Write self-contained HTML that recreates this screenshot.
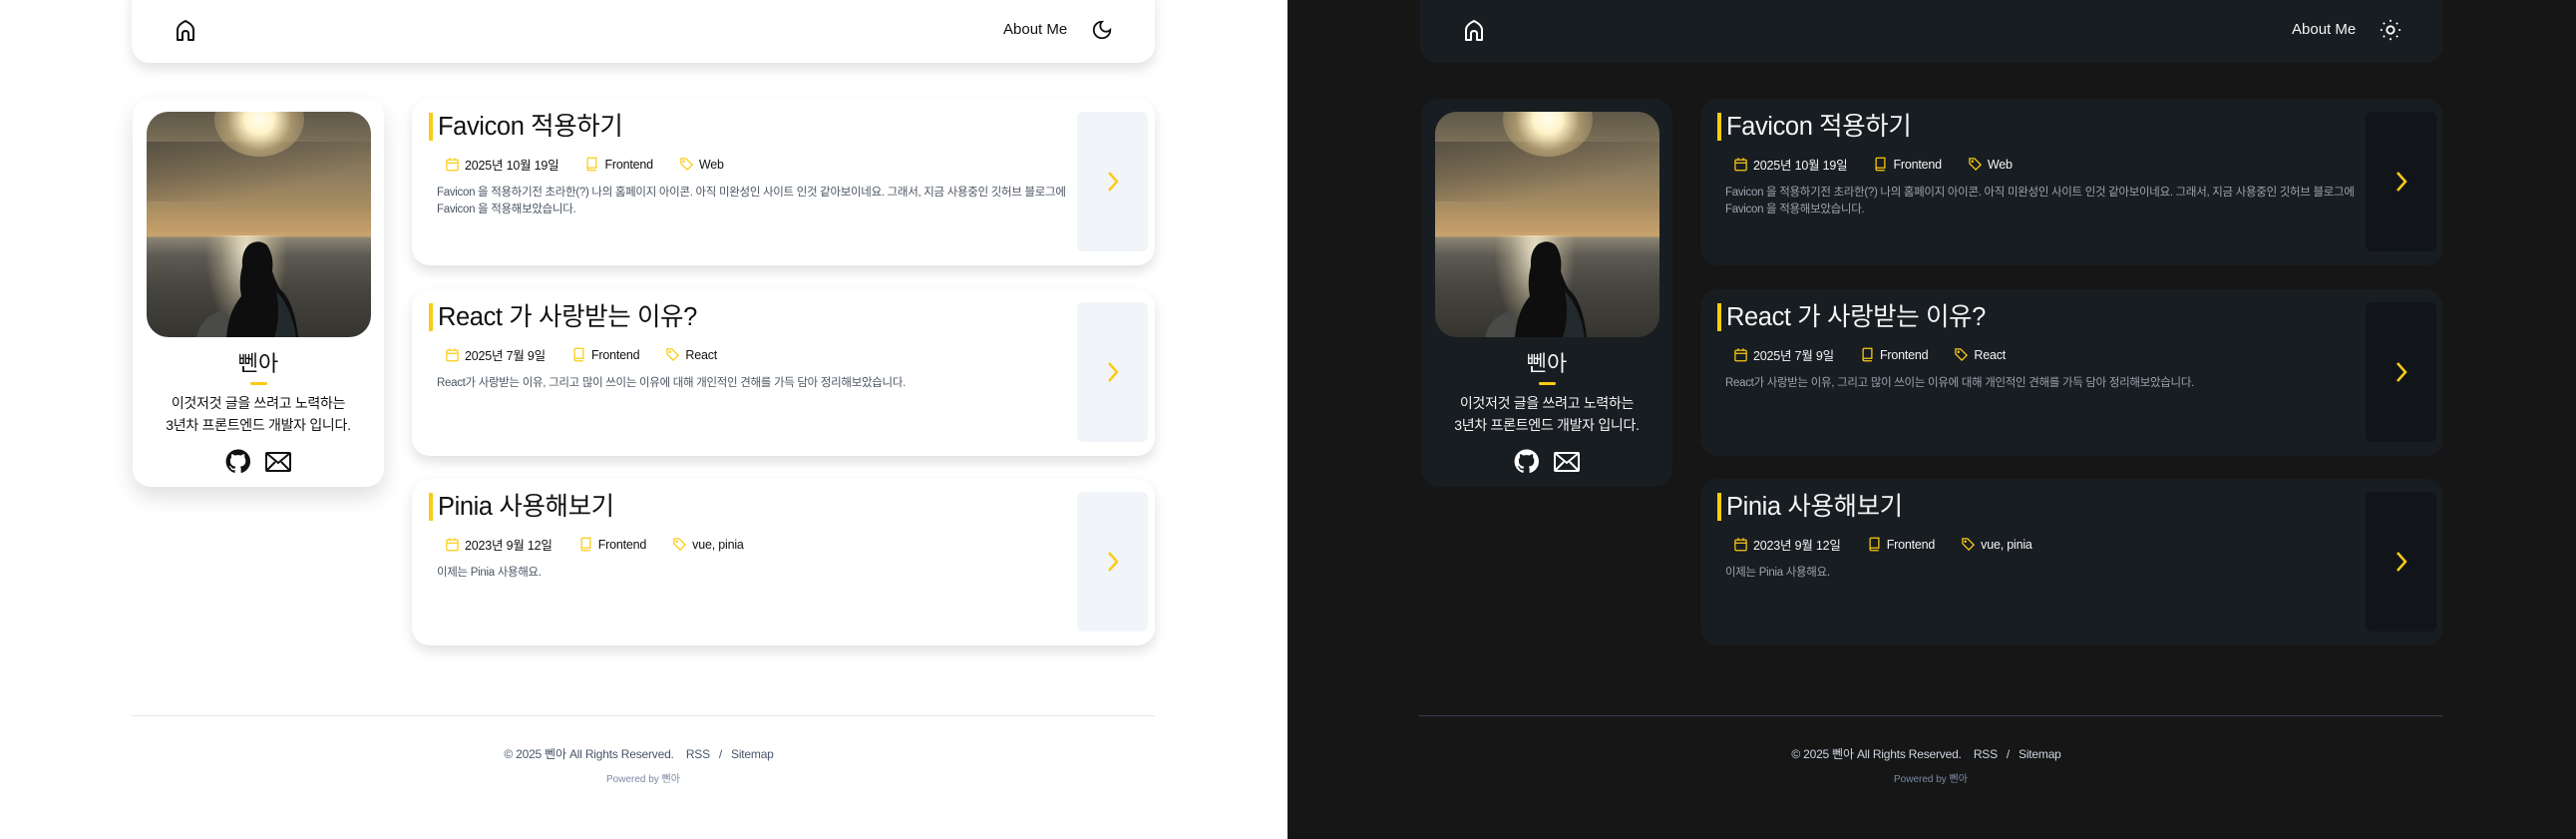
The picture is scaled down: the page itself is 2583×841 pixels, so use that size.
<!DOCTYPE html>
<html><head><meta charset="utf-8">
<style>
*{margin:0;padding:0;box-sizing:border-box}
body{width:2583px;height:841px;overflow:hidden;font-family:"Liberation Sans","Noto Sans CJK KR",sans-serif;position:relative;background:#fff}
.half{position:absolute;top:0;height:841px;width:1292px}
.l{left:0;background:#fff;color:#111}
.d{left:1291px;width:1292px;background:#161616;color:#f3f4f6}
.hdr{position:absolute;left:132px;top:-20px;width:1026px;height:83px;border-radius:18px;background:#fff;box-shadow:0 6px 12px rgba(0,0,0,.12)}
.d .hdr{left:133px;background:#181d21;box-shadow:none}
.home{position:absolute;left:43px;top:39px}
.about{position:absolute;left:874px;top:41px;font-size:15px}
.theme{position:absolute;left:962px;top:39px}
.prof{position:absolute;left:133px;top:99px;width:252px;height:389px;border-radius:18px;background:#fff;box-shadow:0 10px 22px rgba(0,0,0,.13)}
.d .prof{left:134px;background:#181d21;box-shadow:none}
.photo{position:absolute;left:14px;top:13px;width:225px;height:226px;border-radius:22px;overflow:hidden;
background:linear-gradient(180deg,#5f5848 0%,#7c7058 14%,#8e7d5e 28%,#a88d62 42%,#c29c68 52%,#caa46e 55%,#8a8373 56%,#5c5a52 64%,#47453f 78%,#35342f 100%)}
.sun{position:absolute;left:68px;top:-30px;width:90px;height:75px;border-radius:50%;background:radial-gradient(circle,#fffdf0 0%,#fff3c8 25%,rgba(230,200,140,.5) 55%,rgba(200,170,110,0) 100%)}
.glit{position:absolute;left:60px;top:124px;width:80px;height:102px;background:radial-gradient(ellipse at 50% 15%,rgba(255,245,215,.85),rgba(220,205,170,.35) 45%,rgba(0,0,0,0) 72%)}
.cl{position:absolute;left:0;top:30px;width:225px;height:60px;background:linear-gradient(165deg,rgba(60,56,48,.55),rgba(60,56,48,0) 70%)}
.name{position:absolute;left:0;width:252px;top:248px;text-align:center;font-size:22px}
.bar{position:absolute;left:118px;top:284px;width:17px;height:3px;background:#facc15;border-radius:2px}
.desc{position:absolute;left:0;width:252px;top:294px;text-align:center;font-size:14px;line-height:22px;letter-spacing:-.3px}
.soc{position:absolute;left:0;width:252px;top:351px;text-align:center}
.soc svg{margin:0 5px;vertical-align:middle}
.card{position:absolute;left:413px;width:745px;height:167px;border-radius:18px;background:#fff;box-shadow:0 6px 12px rgba(0,0,0,.12)}
.d .card{left:414px;background:#181d21;box-shadow:none}
.ttl{position:absolute;left:17px;top:14px;font-size:25.5px;letter-spacing:-.4px;border-left:4px solid #facc15;padding-left:5px;line-height:28px;height:28px}
.meta{position:absolute;left:33px;top:56px;font-size:12.5px;display:flex;align-items:center;letter-spacing:-.2px}
.meta span{display:inline-flex;align-items:center;margin-right:26px}
.meta svg{margin-right:5px}
.ex{position:absolute;left:25px;top:86px;font-size:11.5px;line-height:17px;color:#4b5563;width:640px;letter-spacing:-.3px}
.d .ex{color:#9ca3af}
.arr{position:absolute;right:7px;top:13px;width:71px;height:140px;border-radius:6px;background:#f1f4f8;display:flex;align-items:center;justify-content:center}
.d .arr{background:#11151a}
.fline{position:absolute;left:132px;top:717px;width:1026px;height:1px;background:#e5e7eb}
.d .fline{background:#374151}
.ftxt{position:absolute;left:132px;width:1026px;top:747px;text-align:center;font-size:12px;color:#475569;letter-spacing:-.2px}
.d .ftxt{color:#cbd5e1}
.ftxt b{font-weight:normal;margin:0 9px}
.pw{position:absolute;left:132px;width:1026px;top:772px;text-align:center;font-size:10px;color:#7c8aa5}
</style></head><body>

<div class="half l">
 <div class="hdr">
  <svg class="home" width="22" height="24" viewBox="0 0 22 24" fill="none" stroke="#111" stroke-width="2"><path d="M3 21V11Q3 6 11 2Q19 6 19 11V21H14V15Q14 12 11 12Q8 12 8 15V21Z" stroke-linejoin="round"/></svg>
  <div class="about">About Me</div>
  <svg class="theme" width="22" height="22" viewBox="0 0 24 24" fill="none" stroke="#111" stroke-width="2"><path d="M12 3a6 6 0 0 0 9 9 9 9 0 1 1-9-9Z"/></svg>
 </div>
 <div class="prof">
  <div class="photo"><div class="cl"></div><div class="sun"></div><div class="glit"></div>
   <svg style="position:absolute;left:0;top:0" width="225" height="226" viewBox="0 0 225 226"><path fill="#4a4a48" d="M50 226Q55 205 75 200L95 226Z"/><path fill="#0e0e0e" d="M80 226Q82 200 95 185Q92 170 96 155Q95 140 103 133Q113 127 121 134Q128 145 126 160Q130 172 134 178Q148 190 152 226Z"/><path fill="#232a2e" d="M130 180Q145 195 150 226H128Q135 205 130 180Z"/></svg>
  </div>
  <div class="name">뻰아</div><div class="bar"></div>
  <div class="desc">이것저것 글을 쓰려고 노력하는<br>3년차 프론트엔드 개발자 입니다.</div>
  <div class="soc">
   <svg width="25" height="25" viewBox="0 0 24 24"><path fill="#111" d="M12 .5a11.5 11.5 0 0 0-3.6 22.4c.6.1.8-.3.8-.6v-2c-3.2.7-3.900-1.5-3.900-1.5-.5-1.3-1.3-1.7-1.3-1.7-1-.7.1-.7.1-.7 1.2.1 1.8 1.2 1.8 1.2 1 1.8 2.7 1.3 3.4 1 .1-.8.4-1.3.7-1.6-2.6-.3-5.3-1.3-5.3-5.7 0-1.3.5-2.3 1.2-3.1-.1-.3-.5-1.5.1-3.1 0 0 1-.3 3.2 1.2a11 11 0 0 1 5.8 0c2.2-1.5 3.2-1.2 3.2-1.2.6 1.6.2 2.8.1 3.1.8.8 1.2 1.8 1.2 3.1 0 4.4-2.7 5.4-5.3 5.7.4.4.8 1.1.8 2.2v3.2c0 .3.2.7.8.6A11.5 11.5 0 0 0 12 .5Z"/></svg>
   <svg width="26" height="22" viewBox="0 0 26 22" fill="none" stroke="#111" stroke-width="2"><rect x="1" y="2" width="24" height="18" rx="1"/><path d="M1 2l12 10L25 2M1 20l9-9M25 20l-9-9"/></svg>
  </div>
 </div>
 <div class="card" style="top:99px">
  <div class="ttl">Favicon 적용하기</div>
  <div class="meta">
   <span><svg width="15" height="15" viewBox="0 0 24 24" fill="none" stroke="#facc15" stroke-width="2"><rect x="3" y="5" width="18" height="17" rx="2"/><path d="M3 10h18M8 2v4M16 2v4"/></svg>2025년 10월 19일</span>
   <span><svg width="15" height="15" viewBox="0 0 24 24" fill="none" stroke="#facc15" stroke-width="2"><path d="M5 20V4a2 2 0 0 1 2-2h12v16H7a2 2 0 0 0 0 4h12"/></svg>Frontend</span>
   <span><svg width="15" height="15" viewBox="0 0 24 24" fill="none" stroke="#facc15" stroke-width="2"><path d="M3 3h8l10 10-8 8L3 11Z"/><circle cx="7.5" cy="7.5" r="1"/></svg>Web</span>
  </div>
  <div class="ex">Favicon 을 적용하기전 초라한(?) 나의 홈페이지 아이콘. 아직 미완성인 사이트 인것 같아보이네요. 그래서, 지금 사용중인 깃허브 블로그에 Favicon 을 적용해보았습니다.</div>
  <div class="arr"><svg width="14" height="24" viewBox="0 0 14 24" fill="none" stroke="#facc15" stroke-width="2.5"><path d="M3 3l8 9-8 9"/></svg></div>
 </div>
 <div class="card" style="top:290px">
  <div class="ttl">React 가 사랑받는 이유?</div>
  <div class="meta">
   <span><svg width="15" height="15" viewBox="0 0 24 24" fill="none" stroke="#facc15" stroke-width="2"><rect x="3" y="5" width="18" height="17" rx="2"/><path d="M3 10h18M8 2v4M16 2v4"/></svg>2025년 7월 9일</span>
   <span><svg width="15" height="15" viewBox="0 0 24 24" fill="none" stroke="#facc15" stroke-width="2"><path d="M5 20V4a2 2 0 0 1 2-2h12v16H7a2 2 0 0 0 0 4h12"/></svg>Frontend</span>
   <span><svg width="15" height="15" viewBox="0 0 24 24" fill="none" stroke="#facc15" stroke-width="2"><path d="M3 3h8l10 10-8 8L3 11Z"/><circle cx="7.5" cy="7.5" r="1"/></svg>React</span>
  </div>
  <div class="ex">React가 사랑받는 이유, 그리고 많이 쓰이는 이유에 대해 개인적인 견해를 가득 담아 정리해보았습니다.</div>
  <div class="arr"><svg width="14" height="24" viewBox="0 0 14 24" fill="none" stroke="#facc15" stroke-width="2.5"><path d="M3 3l8 9-8 9"/></svg></div>
 </div>
 <div class="card" style="top:480px">
  <div class="ttl">Pinia 사용해보기</div>
  <div class="meta">
   <span><svg width="15" height="15" viewBox="0 0 24 24" fill="none" stroke="#facc15" stroke-width="2"><rect x="3" y="5" width="18" height="17" rx="2"/><path d="M3 10h18M8 2v4M16 2v4"/></svg>2023년 9월 12일</span>
   <span><svg width="15" height="15" viewBox="0 0 24 24" fill="none" stroke="#facc15" stroke-width="2"><path d="M5 20V4a2 2 0 0 1 2-2h12v16H7a2 2 0 0 0 0 4h12"/></svg>Frontend</span>
   <span><svg width="15" height="15" viewBox="0 0 24 24" fill="none" stroke="#facc15" stroke-width="2"><path d="M3 3h8l10 10-8 8L3 11Z"/><circle cx="7.5" cy="7.5" r="1"/></svg>vue, pinia</span>
  </div>
  <div class="ex">이제는 Pinia 사용해요.</div>
  <div class="arr"><svg width="14" height="24" viewBox="0 0 14 24" fill="none" stroke="#facc15" stroke-width="2.5"><path d="M3 3l8 9-8 9"/></svg></div>
 </div>
 <div class="fline"></div>
 <div class="ftxt">© 2025 뻰아 All Rights Reserved. <b>RSS</b>/<b>Sitemap</b></div>
 <div class="pw">Powered by 뻰아</div>
</div>

<div class="half d">
 <div class="hdr">
  <svg class="home" width="22" height="24" viewBox="0 0 22 24" fill="none" stroke="#fff" stroke-width="2"><path d="M3 21V11Q3 6 11 2Q19 6 19 11V21H14V15Q14 12 11 12Q8 12 8 15V21Z" stroke-linejoin="round"/></svg>
  <div class="about">About Me</div>
  <svg class="theme" width="22" height="22" viewBox="0 0 24 24" fill="none" stroke="#fff" stroke-width="2"><circle cx="12" cy="12" r="4"/><path d="M12 1v2M12 21v2M1 12h2M21 12h2M4.2 4.2l1.4 1.4M18.4 18.4l1.4 1.4M4.2 19.8l1.4-1.4M18.4 5.6l1.4-1.4"/></svg>
 </div>
 <div class="prof">
  <div class="photo"><div class="cl"></div><div class="sun"></div><div class="glit"></div>
   <svg style="position:absolute;left:0;top:0" width="225" height="226" viewBox="0 0 225 226"><path fill="#4a4a48" d="M50 226Q55 205 75 200L95 226Z"/><path fill="#0e0e0e" d="M80 226Q82 200 95 185Q92 170 96 155Q95 140 103 133Q113 127 121 134Q128 145 126 160Q130 172 134 178Q148 190 152 226Z"/><path fill="#232a2e" d="M130 180Q145 195 150 226H128Q135 205 130 180Z"/></svg>
  </div>
  <div class="name">뻰아</div><div class="bar"></div>
  <div class="desc">이것저것 글을 쓰려고 노력하는<br>3년차 프론트엔드 개발자 입니다.</div>
  <div class="soc">
   <svg width="25" height="25" viewBox="0 0 24 24"><path fill="#fff" d="M12 .5a11.5 11.5 0 0 0-3.6 22.4c.6.1.8-.3.8-.6v-2c-3.2.7-3.900-1.5-3.900-1.5-.5-1.3-1.3-1.7-1.3-1.7-1-.7.1-.7.1-.7 1.2.1 1.8 1.2 1.8 1.2 1 1.8 2.7 1.3 3.4 1 .1-.8.4-1.3.7-1.6-2.6-.3-5.3-1.3-5.3-5.7 0-1.3.5-2.3 1.2-3.1-.1-.3-.5-1.5.1-3.1 0 0 1-.3 3.2 1.2a11 11 0 0 1 5.8 0c2.2-1.5 3.2-1.2 3.2-1.2.6 1.6.2 2.8.1 3.1.8.8 1.2 1.8 1.2 3.1 0 4.4-2.7 5.4-5.3 5.7.4.4.8 1.1.8 2.2v3.2c0 .3.2.7.8.6A11.5 11.5 0 0 0 12 .5Z"/></svg>
   <svg width="26" height="22" viewBox="0 0 26 22" fill="none" stroke="#fff" stroke-width="2"><rect x="1" y="2" width="24" height="18" rx="1"/><path d="M1 2l12 10L25 2M1 20l9-9M25 20l-9-9"/></svg>
  </div>
 </div>
 <div class="card" style="top:99px">
  <div class="ttl">Favicon 적용하기</div>
  <div class="meta">
   <span><svg width="15" height="15" viewBox="0 0 24 24" fill="none" stroke="#facc15" stroke-width="2"><rect x="3" y="5" width="18" height="17" rx="2"/><path d="M3 10h18M8 2v4M16 2v4"/></svg>2025년 10월 19일</span>
   <span><svg width="15" height="15" viewBox="0 0 24 24" fill="none" stroke="#facc15" stroke-width="2"><path d="M5 20V4a2 2 0 0 1 2-2h12v16H7a2 2 0 0 0 0 4h12"/></svg>Frontend</span>
   <span><svg width="15" height="15" viewBox="0 0 24 24" fill="none" stroke="#facc15" stroke-width="2"><path d="M3 3h8l10 10-8 8L3 11Z"/><circle cx="7.5" cy="7.5" r="1"/></svg>Web</span>
  </div>
  <div class="ex">Favicon 을 적용하기전 초라한(?) 나의 홈페이지 아이콘. 아직 미완성인 사이트 인것 같아보이네요. 그래서, 지금 사용중인 깃허브 블로그에 Favicon 을 적용해보았습니다.</div>
  <div class="arr"><svg width="14" height="24" viewBox="0 0 14 24" fill="none" stroke="#facc15" stroke-width="2.5"><path d="M3 3l8 9-8 9"/></svg></div>
 </div>
 <div class="card" style="top:290px">
  <div class="ttl">React 가 사랑받는 이유?</div>
  <div class="meta">
   <span><svg width="15" height="15" viewBox="0 0 24 24" fill="none" stroke="#facc15" stroke-width="2"><rect x="3" y="5" width="18" height="17" rx="2"/><path d="M3 10h18M8 2v4M16 2v4"/></svg>2025년 7월 9일</span>
   <span><svg width="15" height="15" viewBox="0 0 24 24" fill="none" stroke="#facc15" stroke-width="2"><path d="M5 20V4a2 2 0 0 1 2-2h12v16H7a2 2 0 0 0 0 4h12"/></svg>Frontend</span>
   <span><svg width="15" height="15" viewBox="0 0 24 24" fill="none" stroke="#facc15" stroke-width="2"><path d="M3 3h8l10 10-8 8L3 11Z"/><circle cx="7.5" cy="7.5" r="1"/></svg>React</span>
  </div>
  <div class="ex">React가 사랑받는 이유, 그리고 많이 쓰이는 이유에 대해 개인적인 견해를 가득 담아 정리해보았습니다.</div>
  <div class="arr"><svg width="14" height="24" viewBox="0 0 14 24" fill="none" stroke="#facc15" stroke-width="2.5"><path d="M3 3l8 9-8 9"/></svg></div>
 </div>
 <div class="card" style="top:480px">
  <div class="ttl">Pinia 사용해보기</div>
  <div class="meta">
   <span><svg width="15" height="15" viewBox="0 0 24 24" fill="none" stroke="#facc15" stroke-width="2"><rect x="3" y="5" width="18" height="17" rx="2"/><path d="M3 10h18M8 2v4M16 2v4"/></svg>2023년 9월 12일</span>
   <span><svg width="15" height="15" viewBox="0 0 24 24" fill="none" stroke="#facc15" stroke-width="2"><path d="M5 20V4a2 2 0 0 1 2-2h12v16H7a2 2 0 0 0 0 4h12"/></svg>Frontend</span>
   <span><svg width="15" height="15" viewBox="0 0 24 24" fill="none" stroke="#facc15" stroke-width="2"><path d="M3 3h8l10 10-8 8L3 11Z"/><circle cx="7.5" cy="7.5" r="1"/></svg>vue, pinia</span>
  </div>
  <div class="ex">이제는 Pinia 사용해요.</div>
  <div class="arr"><svg width="14" height="24" viewBox="0 0 14 24" fill="none" stroke="#facc15" stroke-width="2.5"><path d="M3 3l8 9-8 9"/></svg></div>
 </div>
 <div class="fline"></div>
 <div class="ftxt">© 2025 뻰아 All Rights Reserved. <b>RSS</b>/<b>Sitemap</b></div>
 <div class="pw">Powered by 뻰아</div>
</div>
</body></html>
